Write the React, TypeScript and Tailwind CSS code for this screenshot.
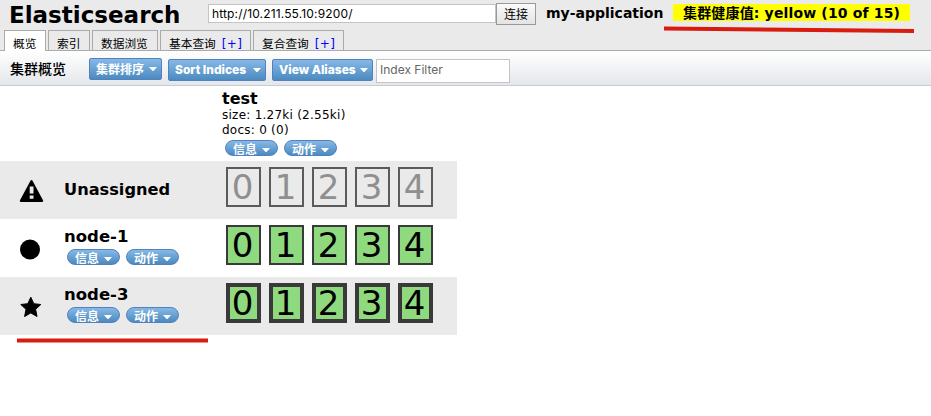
import React from 'react';

const cjk = "font-['Noto_Sans_CJK_SC',sans-serif]";
const verdana = "font-['DejaVu_Sans','Noto_Sans_CJK_SC',sans-serif]";
const ui = "font-['Inter','Noto_Sans_CJK_SC',sans-serif]";

function Caret() {
  return (
    <svg width="8" height="4" viewBox="0 0 8 4" className="block shrink-0" fill="#fff">
      <path d="M0 0h8L4 4.500z" />
    </svg>
  );
}

function Tab({ label, width, active, plus }: { label: string; width: string; active?: boolean; plus?: boolean }) {
  return (
    <div
      className={`flex shrink-0 whitespace-nowrap border border-b-0 border-[#aaa] pl-2 text-[11.7px] leading-[24px] ${width} ${
        active ? 'h-[21px] bg-white' : 'h-5 bg-[#eaeaea]'
      }`}
    >
      <span>{label}</span>
      {plus && <span className={`ml-[6px] text-[12px] leading-[27px] tracking-[0.4px] text-[#0000ff] ${verdana}`}>[+]</span>}
    </div>
  );
}

function MenuButton({ label, className }: { label: string; className: string }) {
  return (
    <button
      className={`flex h-[22px] shrink-0 items-center justify-between whitespace-nowrap rounded-[2px] border border-[#5580bd] bg-linear-to-b from-[#86b9e6] to-[#4b8ac0] pl-1.5 pr-1 text-white ${className}`}
    >
      <span>{label}</span>
      <Caret />
    </button>
  );
}

function Pill({ label }: { label: string }) {
  return (
    <button className={`flex h-4 w-[53px] items-center justify-between overflow-hidden rounded-full border border-[#5580bd] bg-linear-to-b from-[#86b9e6] to-[#4b8ac0] pl-[7px] pr-[7px] text-[12px] font-bold leading-4 text-white ${cjk}`}>
      <span className="pt-[2px]">{label}</span>
      <span className="pt-[4px]"><Caret /></span>
    </button>
  );
}

function Pills() {
  return (
    <div className="flex gap-1.5 pl-[3px]">
      <Pill label="信息" />
      <Pill label="动作" />
    </div>
  );
}

function Shards({ kind }: { kind: 'unassigned' | 'replica' | 'primary' }) {
  const style = {
    unassigned: 'border-2 border-[#5b5b5b] text-[#8f8f8f]',
    replica: 'border-2 border-[#3a3a3a] bg-[#8fd97f] text-black',
    primary: 'border-4 border-[#3a3a3a] bg-[#8fd97f] text-black',
  }[kind];
  return (
    <div className="flex gap-2 pt-1.5">
      {[0, 1, 2, 3, 4].map((n) => (
        <div key={n} className={`flex h-10 w-[35px] items-center justify-center pr-[2px] text-[34px] leading-none ${style}`}>
          {n}
        </div>
      ))}
    </div>
  );
}

function NodeRow({ name, icon, kind, shaded }: { name: string; icon: React.ReactNode; kind: 'unassigned' | 'replica' | 'primary'; shaded?: boolean }) {
  return (
    <div className={`flex h-[58px] w-[457px] ${shaded ? 'bg-[#eaeaea]' : 'bg-white'}`}>
      <div className="w-16 shrink-0 pl-[19px] pt-[18px]">{icon}</div>
      <div className={`w-[162px] shrink-0 ${kind === 'unassigned' ? 'pt-[19px]' : 'pt-2'}`}>
        <div className={`font-bold leading-5 ${kind === 'unassigned' ? 'text-[16.2px]' : 'mb-0.5 text-[16.5px]'}`}>{name}</div>
        {kind !== 'unassigned' && <Pills />}
      </div>
      <Shards kind={kind} />
    </div>
  );
}

export default function App() {
  return (
    <div className={`relative h-[416px] w-[931px] overflow-hidden bg-white text-black ${verdana}`}>
      <header className="flex h-[51px] flex-col justify-between border-b border-[#aaa] bg-[#eaeaea]">
        <div className="flex h-[30px] shrink-0 items-start">
          <h1 className="w-[208px] shrink-0 pl-[9px] text-[23px] font-bold leading-[30px]">Elasticsearch</h1>
          <input
            className={`mt-1 h-[19px] w-[288px] border border-[#c4c4c4] bg-white px-[3px] text-[12px] tracking-[0.15px] outline-none ${ui}`}
            defaultValue="http://10.211.55.10:9200/"
          />
          <button className={`mt-[3px] h-[22px] w-10 border border-[#999] bg-linear-to-b from-[#fafafa] to-[#e4e4e4] pb-px text-[12px] leading-[18px] ${cjk}`}>连接</button>
          <span className="ml-[10px] w-[127px] whitespace-nowrap text-[14px] font-bold leading-[26px]">my-application</span>
          <span className="mt-1 h-[17px] w-[237px] whitespace-nowrap bg-[#ffff00] pl-[10px] text-[14px] font-bold leading-[18px] tracking-[0.16px]">
            集群健康值: yellow (10 of 15)
          </span>
        </div>
        <nav className={`flex h-5 shrink-0 gap-0.5 pl-1 ${cjk}`}>
          <Tab label="概览" width="w-[42px]" active />
          <Tab label="索引" width="w-[42px]" />
          <Tab label="数据浏览" width="w-[66px]" />
          <Tab label="基本查询" width="w-[91px]" plus />
          <Tab label="复合查询" width="w-[91px]" plus />
        </nav>
      </header>
      <div className="flex h-[35px] items-start border-b border-[#c8cbd0] bg-linear-to-b from-white to-[#e4e7eb]">
        <h2 className={`w-[89px] shrink-0 pl-[10px] text-[14px] font-medium leading-[35px] ${cjk}`}>集群概览</h2>
        <MenuButton label="集群排序" className={`mt-[7px] mr-1.5 w-[73px] text-[12px] font-bold ${cjk}`} />
        <MenuButton label="Sort Indices" className={`mt-2 mr-1.5 w-[98px] text-[12px] font-extrabold ${ui}`} />
        <MenuButton label="View Aliases" className={`mt-2 mr-[3px] w-[101px] text-[12px] font-extrabold ${ui}`} />
        <input
          className={`mt-2 h-6 w-[134px] border border-[#c4c4c4] bg-white px-[3px] pb-[3px] text-[12px] outline-none placeholder:text-[#666] ${ui}`}
          placeholder="Index Filter"
        />
      </div>
      <main>
        <div className="h-[75px] pl-[222px] pt-[3px]">
          <div className="text-[16px] font-bold leading-[19px]">test</div>
          <div className="text-[12px] leading-[15px] tracking-[0.25px]">size: 1.27ki (2.55ki)</div>
          <div className="mb-0.5 text-[12px] leading-[15px] tracking-[0.25px]">docs: 0 (0)</div>
          <Pills />
        </div>
        <NodeRow
          name="Unassigned"
          kind="unassigned"
          shaded
          icon={
            <svg width="26" height="25" viewBox="0 0 26 25">
              <path d="M11.6 1.5c.4-.8 1.4-.8 1.8 0L24 21.3c.5.9 0 1.7-1 1.7H2c-1 0-1.500-.8-1-1.700z" />
              <path d="M10.700 7.500h3.800v7h-3.800zm0 9h3.800v3.200h-3.800z" fill="#eaeaea" />
            </svg>
          }
        />
        <NodeRow
          name="node-1"
          kind="replica"
          icon={
            <svg width="26" height="25" viewBox="0 0 26 25">
              <circle cx="11" cy="12.500" r="10" />
            </svg>
          }
        />
        <NodeRow
          name="node-3"
          kind="primary"
          shaded
          icon={
            <svg width="26" height="25" viewBox="0 0 26 25">
              <path
                d="M11.800 2.200l3 6.500 7 .8-5.200 4.800 1.400 7.200-6.200-3.600-6.200 3.600L7 14.300 1.800 9.500l7-.8z"
                stroke="#000"
                strokeWidth="1"
                strokeLinejoin="round"
              />
            </svg>
          }
        />
      </main>
      <svg className="pointer-events-none absolute left-0 top-0" width="931" height="416" stroke="#d91c10" strokeWidth="4">
        <path d="M664 28.500L914 31M17 340.500H208" />
      </svg>
    </div>
  );
}
